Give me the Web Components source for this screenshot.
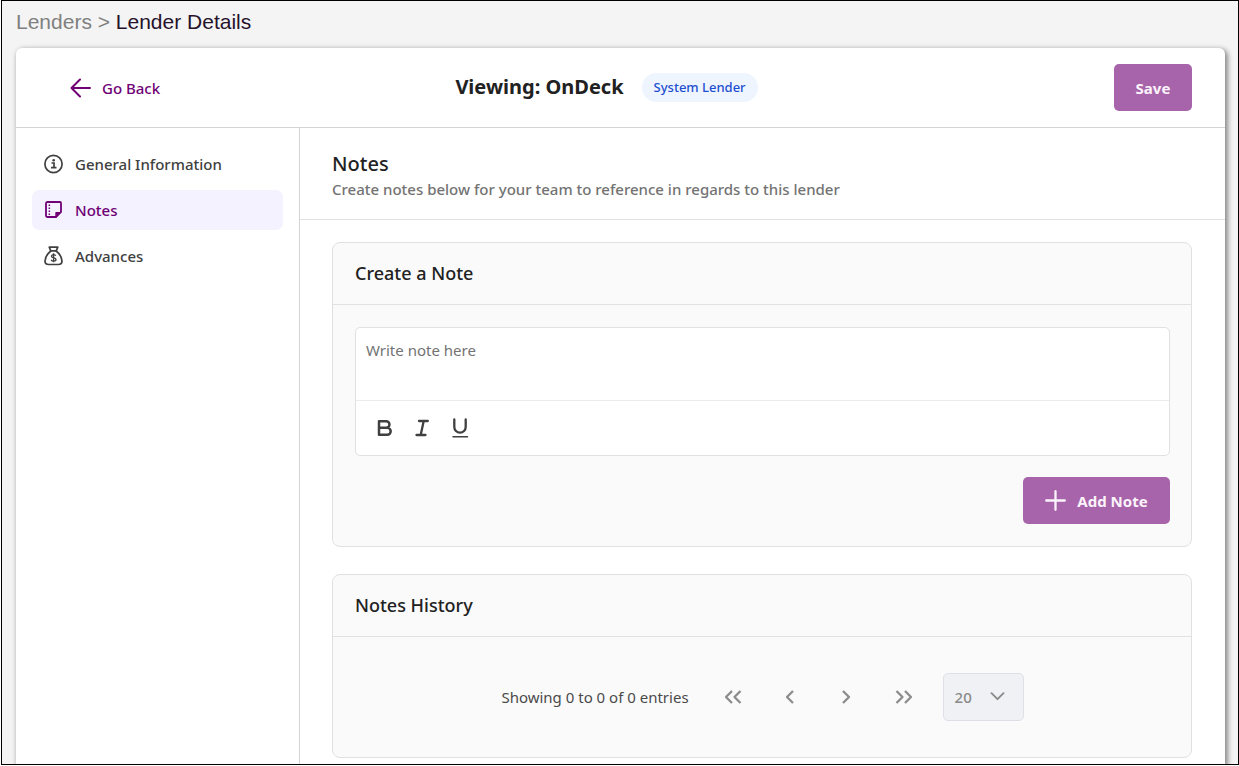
<!DOCTYPE html>
<html lang="en">
<head>
<meta charset="utf-8">
<meta name="viewport" content="width=device-width, initial-scale=1">
<title>Lender Details</title>
<style>
  html { height: 100%; background: #fff; }
  body { margin: 0; height: 100%; overflow: hidden; font-family: "Noto Sans", "Open Sans", sans-serif; font-size: 15px; color: #212121;
    --purple: #6f0075; --button: #a864aa; --line: #d3d4d6; --soft-line: #e1e1e1; --panel: #fafafa; --ink: #404040; }
</style>
</head>
<body>
<app-shell>
  <bread-crumb slot="crumb"></bread-crumb>
  <lender-header slot="header" heading="Viewing: OnDeck" badge="System Lender"></lender-header>
  <side-nav slot="nav">
    <nav-item icon="info">General Information</nav-item>
    <nav-item icon="note" active>Notes</nav-item>
    <nav-item icon="bag">Advances</nav-item>
  </side-nav>
  <section-title>
    <span slot="title">Notes</span>
    <span slot="text">Create notes below for your team to reference in regards to this lender</span>
  </section-title>
  <panel-stack>
    <panel-card>
      <span slot="title">Create a Note</span>
      <note-form></note-form>
    </panel-card>
    <panel-card>
      <span slot="title">Notes History</span>
      <page-controls></page-controls>
    </panel-card>
  </panel-stack>
</app-shell>

<script>
const define = (name, markup) => customElements.define(name, class extends HTMLElement {
  constructor() {
    super();
    this.attachShadow({ mode: 'open' });
  }
  connectedCallback() {
    this.shadowRoot.innerHTML = '<style>*{box-sizing:border-box}:host{display:block;box-sizing:border-box}</style>' +
      (typeof markup === 'function' ? markup(this) : markup);
  }
});

define('app-shell', `
<style>
  :host { height: 100%; padding: 0 0 1px 1px; }
  .frame { height: 100%; border: 1px solid #000; background: #f4f4f4; overflow: hidden; display: flex; flex-direction: column; }
  .card { flex: 1; min-height: 0; margin: 0 13px 0 14px; background: #fff; border-radius: 6px 6px 0 0; box-shadow: 2px 2px 5px 1px #8c8c8c; display: flex; flex-direction: column; }
  .body { flex: 1; min-height: 0; display: flex; }
  main { flex: 1; min-width: 0; }
</style>
<div class="frame">
  <slot name="crumb"></slot>
  <div class="card">
    <slot name="header"></slot>
    <div class="body"><slot name="nav"></slot><main><slot></slot></main></div>
  </div>
</div>`);

define('bread-crumb', `
<style>
  :host { font: 21px/24px "Liberation Sans", Arial, sans-serif; padding: 9px 14px 14px; color: #808080; }
  a { color: inherit; text-decoration: none; }
  .here { color: #27122b; }
</style>
<nav aria-label="Breadcrumb"><a href="#lenders">Lenders</a> &gt; <span class="here">Lender Details</span></nav>`);

define('lender-header', el => `
<style>
  :host { display: grid; grid-template-columns: 1fr auto 1fr; align-items: center; height: 80px; padding: 0 33px 0 5px; border-bottom: 1px solid var(--line); }
  a { display: flex; align-items: center; gap: 11px; padding-left: 49px; color: var(--purple); text-decoration: none; font-weight: 500; }
  .mid { display: flex; align-items: center; gap: 18px; }
  h1 { margin: 0; font-size: 20px; line-height: 28px; font-weight: 700; padding-bottom: 2px; }
  .badge { font-size: 13px; line-height: 29px; font-weight: 500; color: #1d4fd0; background: #eef5ff; padding: 0 12px; border-radius: 15px; }
  button { justify-self: end; width: 78px; height: 47px; border: 0; border-radius: 5px; background: var(--button); color: #fbf3fb; font: 700 15px "Noto Sans", sans-serif; }
</style>
<a href="#back"><svg width="21" height="20" viewBox="0 0 21 20" fill="none" stroke="currentColor" stroke-width="2" stroke-linecap="round" stroke-linejoin="round" aria-hidden="true"><path d="M20 10H1.500M10 1.500L1.500 10L10 18.500"/></svg>Go Back</a>
<div class="mid"><h1>${el.getAttribute('heading')}</h1><span class="badge">${el.getAttribute('badge')}</span></div>
<button type="button">Save</button>`);

define('side-nav', `
<style>
  :host { width: 284px; flex: none; border-right: 1px solid var(--line); padding: 16px; }
  nav { display: flex; flex-direction: column; gap: 6px; }
</style>
<nav aria-label="Lender sections"><slot></slot></nav>`);

const icons = {
  info: '<g fill="none" stroke="currentColor" stroke-width="1.700"><circle cx="9.500" cy="10" r="8.600"/><path d="M7.500 9h2.500v4.500M7 13.700h5.500"/></g><circle cx="9.700" cy="6.300" r="1.300" fill="currentColor"/>',
  note: '<path d="M3.500 2h12.500c.6 0 1 .4 1 1v9l-5 5h-8.500c-.8 0-1.500-.7-1.500-1.500V3.500C2 2.700 2.700 2 3.500 2z" fill="none" stroke="currentColor" stroke-width="1.800"/><path d="M11.300 17.700v-4.500c0-.8.5-1.300 1.300-1.300H17.500z" fill="currentColor"/><path d="M4.600 4.500h1.500v1.500H4.600zM4.600 7.500h1.500v1.500H4.600zM4.600 10.500h1.500v1.500H4.600zM4.600 13.500h1.500v1.500H4.600z" fill="currentColor"/>',
  bag: '<g fill="none" stroke="currentColor" stroke-width="1.700" stroke-linecap="round" stroke-linejoin="round"><path d="M5.200 1.200h8.600l-1.600 3.600H6.800z"/><path d="M6.800 5C3.800 7.500 1 11 1 15c0 2.300 1.300 3.500 3.700 3.500h9.600c2.400 0 3.700-1.200 3.700-3.500 0-4-2.800-7.500-5.800-10"/></g><path d="M11.700 9.800c-.3-.8-1.100-1.200-2.100-1.200-1.200 0-2.100.6-2.100 1.600 0 2.400 4.500 1 4.500 3.300 0 1-1 1.600-2.300 1.600-1.200 0-2.200-.5-2.500-1.400M9.600 7.300v9" fill="none" stroke="currentColor" stroke-width="1.300"/>'
};
define('nav-item', el => `
<style>
  a { display: flex; align-items: center; gap: 11px; height: 40px; padding: 0 12px 1px; border-radius: 7px; color: var(--ink); text-decoration: none; font-weight: 500; }
  a[aria-current] { background: #f4f2fe; color: var(--purple); }
</style>
<a href="#${el.getAttribute('icon')}" ${el.hasAttribute('active') ? 'aria-current="page"' : ''}><svg width="20" height="20" viewBox="0 0 20 20" aria-hidden="true">${icons[el.getAttribute('icon')]}</svg><slot></slot></a>`);

define('section-title', `
<style>
  :host { padding: 22px 32px 18px; border-bottom: 1px solid var(--soft-line); }
  h2 { margin: 0; font-size: 20px; line-height: 28px; font-weight: 500; }
  p { margin: 0; line-height: 23px; color: #737373; font-weight: 500; }
</style>
<h2><slot name="title"></slot></h2><p><slot name="text"></slot></p>`);

define('panel-stack', `
<style>:host { display: flex; flex-direction: column; gap: 27px; padding: 22px 33px 32px 32px; }</style><slot></slot>`);

define('panel-card', `
<style>
  :host { border: 1px solid var(--soft-line); border-radius: 8px; background: var(--panel); }
  h3 { margin: 0; padding: 0 22px; font-size: 18px; line-height: 61px; font-weight: 500; border-bottom: 1px solid var(--soft-line); }
  .body { padding: 22px 21px 22px 22px; }
</style>
<h3><slot name="title"></slot></h3><div class="body"><slot></slot></div>`);

define('note-form', `
<style>
  form { display: flex; flex-direction: column; gap: 21px; }
  .editor { border: 1px solid var(--soft-line); border-radius: 5px; background: #fff; overflow: hidden; }
  textarea { display: block; width: 100%; height: 72px; border: 0; outline: 0; resize: none; background: none; padding: 11px 10px; font: 15px/22px "Noto Sans", sans-serif; color: var(--ink); }
  textarea::placeholder { color: #737373; opacity: 1; }
  .tools { display: flex; gap: 16px; align-items: center; height: 55px; padding: 0 18px; border-top: 1px solid #ebebeb; }
  .tools button { width: 22px; height: 30px; padding: 0; border: 0; background: none; color: var(--ink); display: grid; place-items: center; }
  .add { align-self: flex-end; display: flex; align-items: center; justify-content: center; gap: 11px; width: 147px; height: 47px; border: 0; border-radius: 5px; background: var(--button); color: #fbf3fb; font: 700 15px "Noto Sans", sans-serif; padding: 0; }
</style>
<form>
  <div class="editor">
    <textarea aria-label="Note" placeholder="Write note here"></textarea>
    <div class="tools">
      <button type="button" aria-label="Bold"><svg width="22" height="22" viewBox="0 0 22 22" fill="none" stroke="currentColor" stroke-width="2.500" stroke-linejoin="round"><path d="M5 4.300h7.200a3.200 3.200 0 0 1 0 6.500H5zM5 10.800h8.200a3.500 3.500 0 0 1 0 7H5z"/></svg></button>
      <button type="button" aria-label="Italic"><svg width="22" height="22" viewBox="0 0 22 22" fill="none" stroke="currentColor" stroke-width="2.300" stroke-linecap="round"><path d="M7 4h8.800M4.500 18h9M11.700 4L8.700 18"/></svg></button>
      <button type="button" aria-label="Underline"><svg width="22" height="22" viewBox="0 0 22 22" fill="none" stroke="currentColor" stroke-linecap="round"><path d="M4.300 2.500V10a5.700 5.700 0 0 0 11.400 0V2.500" stroke-width="2.300"/><path d="M3 19.700h14.500" stroke-width="1.500"/></svg></button>
    </div>
  </div>
  <button class="add" type="button"><svg width="21" height="21" viewBox="0 0 21 21" fill="none" stroke="currentColor" stroke-width="2.300" stroke-linecap="round" aria-hidden="true"><path d="M10.500 1.200v18.600M1.200 10.500h18.600"/></svg>Add Note</button>
</form>`);

const arrow = (label, d) => `<button type="button" aria-label="${label}"><svg width="18" height="14" viewBox="0 0 18 14" fill="none" stroke="currentColor" stroke-width="2.300" stroke-linejoin="round"><path d="${d}"/></svg></button>`;
define('page-controls', `
<style>
  :host { display: flex; align-items: center; justify-content: center; padding: 14px 0; }
  .count { color: #4a4a4a; margin-right: 16px; }
  .arrows { display: flex; margin-right: 10px; }
  .arrows button { width: 57px; height: 46px; padding: 0; border: 0; background: none; color: #8c8c8c; display: grid; place-items: center; }
  .size { position: relative; width: 81px; height: 48px; }
  select { appearance: none; width: 100%; height: 100%; border: 1px solid #dde1e7; border-radius: 5px; background: #f0f1f4; color: #8a8a8a; font: 500 15px "Noto Sans", sans-serif; padding: 0 11px; opacity: 1; }
  .size svg { position: absolute; right: 19px; top: 19px; color: #8a8a8a; pointer-events: none; }
</style>
<span class="count">Showing 0 to 0 of 0 entries</span>
<div class="arrows">
${arrow('First page', 'M8 1L2 7L8 13M16.500 1L10.500 7L16.500 13')}
${arrow('Previous page', 'M12 1L6 7L12 13')}
${arrow('Next page', 'M5 1L11 7L5 13')}
${arrow('Last page', 'M1.500 1L7.500 7L1.500 13M10 1L16 7L10 13')}
</div>
<div class="size"><select aria-label="Entries per page"><option>20</option><option>50</option><option>100</option></select><svg width="15" height="9" viewBox="0 0 15 9" fill="none" stroke="currentColor" stroke-width="1.900" stroke-linecap="round" stroke-linejoin="round"><path d="M1.500 1.200L7.500 7.200L13.500 1.200"/></svg></div>`);
</script>
</body>
</html>
